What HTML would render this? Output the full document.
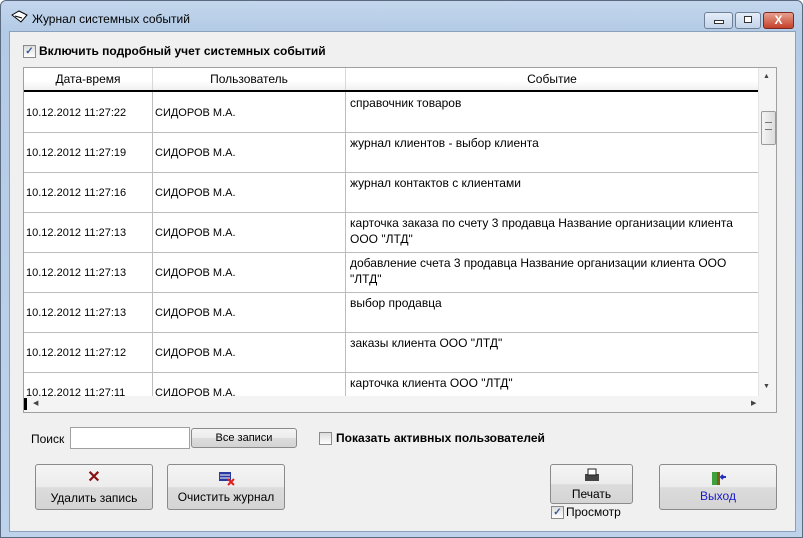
<!DOCTYPE html><html><head><meta charset="utf-8"><style>
body{margin:0;width:803px;height:538px;overflow:hidden;font-family:"Liberation Sans",sans-serif;background:#fff}
.win{position:absolute;left:0;top:0;width:801px;height:536px;border:1px solid #5a6a80;border-radius:6px 6px 0 0;background:linear-gradient(#c3d6ec,#b4cbe6 30px,#bed3ea);}
.client{position:absolute;left:8px;top:30px;width:785px;height:499px;background:#f0f0f0;border:1px solid #8aa0bc}
.t{position:absolute;font-size:12px;color:#000;white-space:nowrap}
.tb{position:absolute;height:15px;top:11px;border:1px solid #6f7f96;border-radius:3px;background:linear-gradient(#e4edf8,#c4d4ea)}
.grid{position:absolute;left:22px;top:66px;width:754px;height:346px;border:1px solid #a0a0a0;background:#fff;overflow:hidden;box-sizing:border-box}
.row{position:absolute;left:0;width:734px;height:40px;border-bottom:1px solid #bdbdbd;font-size:11px}
.c{position:absolute;top:0;height:40px;border-right:1px solid #bdbdbd}
.btn{position:absolute;border:1px solid #8a8a8a;border-radius:3px;background:linear-gradient(#f4f4f4 0,#ececec 50%,#dcdcdc 51%,#d4d4d4);text-align:center;font-size:12px;box-sizing:border-box}
.cb{position:absolute;width:11px;height:11px;border:1px solid #8a8a8a;background:linear-gradient(#ddd,#fff);font-size:10px;line-height:11px;text-align:center;color:#3a5a9a;font-weight:bold}
</style></head><body>
<div class="win">
<svg style="position:absolute;left:10px;top:9px" width="18" height="14"><path d="M1 5 L8 1 L16 5 L10 12 Z" fill="#fff" stroke="#000"/><path d="M4 6 L11 8" stroke="#000"/></svg>
<div class="t" style="left:31px;top:11px;font-size:12px">Журнал системных событий</div>
<div class="tb" style="left:703px;width:27px"><div style="position:absolute;left:9px;top:7px;width:8px;height:2px;border:1px solid #333;background:#fff"></div></div>
<div class="tb" style="left:734px;width:24px"><div style="position:absolute;left:8px;top:3px;width:6px;height:5px;border:1px solid #333;background:#fff"></div></div>
<div class="tb" style="left:762px;width:29px;background:linear-gradient(#e8a090,#c4402a);border-color:#7a2a20;color:#fff;font-weight:bold;text-align:center;font-size:12px;line-height:15px">X</div>
<div class="client"></div>
<div class="cb" style="left:22px;top:44px">✓</div>
<div class="t" style="left:38px;top:43px;font-weight:bold">Включить подробный учет системных событий</div>
<div class="grid">
<div style="position:absolute;left:0;top:0;width:734px;height:22px;border-bottom:2px solid #000;background:linear-gradient(#fff 60%,#f0f0f0);font-size:12px">
<div class="c" style="left:0;width:128px;height:22px;border-color:#d8d8d8;text-align:center;line-height:22px">Дата-время</div>
<div class="c" style="left:129px;width:192px;height:22px;border-color:#d8d8d8;text-align:center;line-height:22px">Пользователь</div>
<div class="c" style="left:322px;width:412px;height:22px;border:0;text-align:center;line-height:22px">Событие</div></div>
<div id="rows"></div>
<div style="position:absolute;left:734px;top:0;width:19px;height:328px;background:#f4f4f4;border-left:1px solid #e4e4e4"><div style="position:absolute;left:4px;top:5px;font-size:7px;color:#444">▲</div><div style="position:absolute;left:2px;top:43px;width:13px;height:32px;border:1px solid #9a9a9a;border-radius:2px;background:linear-gradient(90deg,#f4f4f4,#dcdcdc)"><div style="margin:10px 3px;height:6px;border-top:1px solid #777;border-bottom:1px solid #777"></div></div><div style="position:absolute;left:4px;top:315px;font-size:7px;color:#444">▼</div></div>
<div style="position:absolute;left:0;top:328px;width:753px;height:16px;background:#f4f4f4"><div style="position:absolute;left:0;top:2px;width:3px;height:12px;background:#000"></div><div style="position:absolute;left:9px;top:3px;font-size:7px;color:#444">◀</div><div style="position:absolute;left:727px;top:3px;font-size:7px;color:#444">▶</div></div>
</div>
<div class="t" style="left:30px;top:431px">Поиск</div>
<div style="position:absolute;left:69px;top:426px;width:118px;height:20px;border:1px solid #a0a0a0;background:#fff"></div>
<div class="btn" style="left:190px;top:427px;width:106px;height:20px;font-size:11px;line-height:18px">Все записи</div>
<div class="cb" style="left:318px;top:431px"></div>
<div class="t" style="left:335px;top:430px;font-weight:bold">Показать активных пользователей</div>
<div class="btn" style="left:34px;top:463px;width:118px;height:46px"><div style="color:#8a1010;font-size:16px;font-weight:bold;margin-top:4px;line-height:18px">✕</div><div style="margin-top:4px">Удалить запись</div></div>
<div class="btn" style="left:166px;top:463px;width:118px;height:46px"><svg width="20" height="16" style="margin-top:6px"><rect x="3" y="1" width="12" height="9" fill="#2a3aa0"/><path d="M4 4h10M4 7h10" stroke="#fff"/><path d="M12 8l6 6M18 8l-6 6" stroke="#e02020" stroke-width="2"/></svg><div style="margin-top:0">Очистить журнал</div></div>
<div class="btn" style="left:549px;top:463px;width:83px;height:40px"><svg width="18" height="16" style="margin-top:3px"><rect x="2" y="6" width="14" height="7" fill="#444"/><rect x="5" y="1" width="8" height="6" fill="#fff" stroke="#222"/></svg><div style="margin-top:0">Печать</div></div>
<div class="cb" style="left:550px;top:505px">✓</div>
<div class="t" style="left:565px;top:504px">Просмотр</div>
<div class="btn" style="left:658px;top:463px;width:118px;height:46px"><svg width="20" height="18" style="margin-top:5px"><rect x="4" y="2" width="8" height="13" fill="#7a6010"/><rect x="4" y="2" width="5" height="13" fill="#40a040"/><path d="M13 7h5M15 5l-2 2 2 2" stroke="#2030c0" stroke-width="2" fill="none"/></svg><div style="color:#1a1acc;margin-top:-2px">Выход</div></div>
</div>
<script>
var d=[["10.12.2012 11:27:22","справочник товаров",""],["10.12.2012 11:27:19","журнал клиентов - выбор клиента",""],["10.12.2012 11:27:16","журнал контактов с клиентами",""],["10.12.2012 11:27:13","карточка заказа по счету 3 продавца Название организации клиента","ООО \"ЛТД\""],["10.12.2012 11:27:13","добавление счета 3 продавца Название организации клиента ООО","\"ЛТД\""],["10.12.2012 11:27:13","выбор продавца",""],["10.12.2012 11:27:12","заказы клиента ООО \"ЛТД\"",""],["10.12.2012 11:27:11","карточка клиента ООО \"ЛТД\"",""]];
var h="";d.forEach(function(r,i){h+='<div class="row" style="top:'+(24+i*40)+'px"><div class="c" style="left:0;width:128px"><span style="position:absolute;left:2px;top:15px">'+r[0]+'</span></div><div class="c" style="left:129px;width:192px"><span style="position:absolute;left:2px;top:15px">СИДОРОВ М.А.</span></div><div style="position:absolute;left:326px;top:3px;font-size:12px;line-height:16px">'+r[1]+'<br>'+r[2]+'</div></div>'});
document.getElementById("rows").innerHTML=h;
</script>
</body></html>
